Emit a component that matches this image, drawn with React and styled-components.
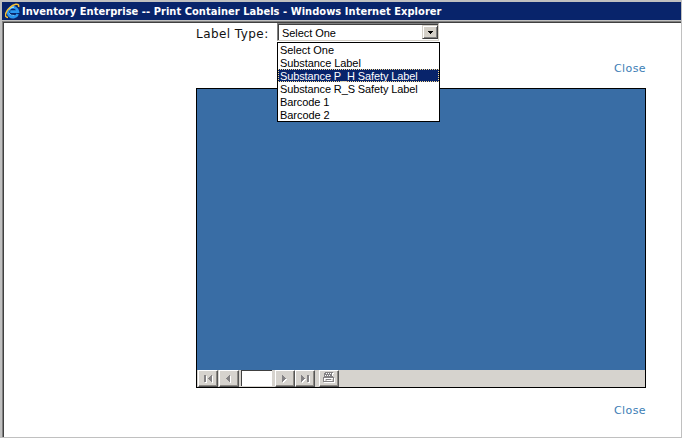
import React from "react";
import styled, { createGlobalStyle, css } from "styled-components";

const GlobalStyle = createGlobalStyle`
  * { box-sizing: border-box; }
  body { margin: 0; background: #fff; overflow: hidden; }
`;

const Window = styled.div`
  width: 682px;
  height: 438px;
  display: flex;
  flex-direction: column;
  background: #c0c0c0;
  padding: 2px 1px 1px 2px;
`;

const TitleBar = styled.header`
  height: 18px;
  flex: none;
  display: flex;
  align-items: center;
  padding-left: 3px;
  background: #08246b;
  color: #fff;
  font: bold 11px/18px "DejaVu Sans Condensed", "DejaVu Sans", sans-serif;
  letter-spacing: 0.05px;
  white-space: nowrap;
`;

const TitleText = styled.span`
  margin-left: 2px;
  padding-top: 1px;
`;

const Frame = styled.main`
  flex: 1;
  margin-top: 1px;
  display: flex;
  flex-direction: column;
  background: #fff;
  border-top: 1px solid #808080;
  border-left: 1px solid #808080;
  box-shadow: inset 1px 1px #404040;
  padding: 1px 0 0 193px;
`;

const FormRow = styled.div`
  display: flex;
  height: 18px;
`;

const Label = styled.label`
  width: 81px;
  padding-top: 3px;
  color: #111;
  font: 12px/17px "DejaVu Sans", Verdana, sans-serif;
  letter-spacing: 0.44px;
  white-space: nowrap;
`;

const SelectWrap = styled.div`
  position: relative;
  width: 162px;
  height: 18px;
`;

const listFont = css`
  font-family: "Liberation Sans", Arial, sans-serif;
  font-size: 11px;
  color: #000;
  white-space: nowrap;
`;

const SelectBox = styled.div`
  ${listFont}
  height: 18px;
  display: flex;
  justify-content: space-between;
  background: #fff;
  border: 1px solid;
  border-color: #808080 #d4d0c8 #d4d0c8 #808080;
  box-shadow: inset 1px 1px #404040;
  padding: 1px 0 1px 4px;
  line-height: 17px;
  letter-spacing: -0.06px;
`;

const DropButton = styled.span`
  width: 16px;
  height: 14px;
  background: #d4d0c8;
  border: 1px solid;
  border-color: #d4d0c8 #404040 #404040 #d4d0c8;
  box-shadow: inset 1px 1px #fff, inset -1px -1px #808080;
  display: flex;
  align-items: center;
  justify-content: center;
`;

const Menu = styled.ul`
  position: absolute;
  z-index: 2;
  top: 19px;
  left: 0;
  width: 163px;
  margin: 0;
  padding: 0;
  list-style: none;
  background: #fff;
  border: 1px solid #000;
`;

const Option = styled.li`
  ${listFont}
  height: 13px;
  padding-left: 2px;
  line-height: 14px;
  letter-spacing: ${(p) => p.$spacing}px;
  ${(p) =>
    p.$active &&
    css`
      color: #fff;
      background: #08246b;
      outline: 1px dotted #f7db94;
      outline-offset: -1px;
    `}
`;

const CloseLink = styled.a`
  width: 450px;
  height: 16px;
  margin-top: ${(p) => p.$gap}px;
  color: #3b7db5;
  font: 11px/16px "DejaVu Sans", Verdana, sans-serif;
  letter-spacing: 0.4px;
  text-align: right;
`;

const Viewer = styled.section`
  width: 450px;
  height: 300px;
  margin-top: 11px;
  display: flex;
  flex-direction: column;
  border: 1px solid #000;
  background: #396da5;
`;

const Canvas = styled.div`
  flex: 1;
`;

const Toolbar = styled.div`
  height: 17px;
  display: flex;
  background: #d6d3ce;
  padding-left: 1px;
`;

const ToolButton = styled.button`
  width: 20px;
  height: 17px;
  margin: 0 ${(p) => p.$gap || 0}px 0 0;
  padding: 0 0 0 1px;
  display: flex;
  align-items: flex-start;
  justify-content: flex-start;
  background: #d6d3ce;
  border: 1px solid;
  border-color: #fff #555 #555 #fff;
  box-shadow: inset -1px -1px #8c8984;
`;

const PageInput = styled.input`
  width: 31px;
  height: 16px;
  margin: 0 3px 0 0;
  padding: 0;
  background: #fff;
  border: 0 solid #404040;
  border-width: 1px 0 0 1px;
  border-radius: 0;
`;

const BrowserLogo = () => (
  <svg width="15" height="16" viewBox="0 0 15 16">
    <path
      d="M12.7 11A5 5 0 1 1 13 8.6H5.2"
      fill="none"
      stroke="#2a96ef"
      strokeWidth="2.6"
    />
    <path d="M4 6.3Q5.7 3.8 9 4.2" fill="none" stroke="#9be0ff" strokeWidth="1.4" />
    <path d="M3.8 10Q5.5 13 9.5 12.5" fill="none" stroke="#6cc6ff" strokeWidth="1" />
    <path
      d="M3 14.5C-1.5 14.4 .5 8.5 4.4 5C8 1.5 14.7-.9 13.6 4"
      fill="none"
      stroke="#f7c235"
      strokeWidth="1.5"
    />
  </svg>
);

const glyphs = {
  first: <path d="M4 4h2v7H4zM11 4h1v7h-1v-1h-1V9H9V8H8V7h1V6h1V5h1z" />,
  prev: <path d="M8 4h1v7H8v-1H7V9H6V8H5V7h1V6h1V5h1z" />,
  next: <path d="M5 4h1v1h1v1h1v1h1v1H8v1H7v1H6v1H5z" />,
  last: <path d="M4 4h1v1h1v1h1v1h1v1H7v1H6v1H5v1H4zM10 4h2v7h-2z" />,
  print: (
    <path
      fillRule="evenodd"
      d="M4 1h8v1h-1v3h1v1h1v5H2V6h1V2h1zM5 2v1h1V2zM7 2v1h1V2zM9 2v1h1V2zM4 4v1h1V4zM6 4v1h1V4zM8 4v1h1V4zM3 7v3h9V7zM5 8h5v1H5z"
    />
  ),
};

const Glyph = ({ name }) => (
  <svg width="16" height="14" viewBox="0 0 16 14" shapeRendering="crispEdges">
    <g fill="#fff" transform="translate(1 1)">{glyphs[name]}</g>
    <g fill="#848284">{glyphs[name]}</g>
  </svg>
);

const options = [
  { text: "Select One", spacing: -0.04 },
  { text: "Substance Label", spacing: -0.08 },
  { text: "Substance P_H Safety Label", spacing: -0.12, active: true },
  { text: "Substance R_S Safety Label", spacing: -0.12 },
  { text: "Barcode 1", spacing: -0.1 },
  { text: "Barcode 2", spacing: -0.06 },
];

export default function App() {
  return (
    <>
      <GlobalStyle />
      <Window>
        <TitleBar>
          <BrowserLogo />
          <TitleText>Inventory Enterprise -- Print Container Labels - Windows Internet Explorer</TitleText>
        </TitleBar>
        <Frame>
          <FormRow>
            <Label>Label Type:</Label>
            <SelectWrap>
              <SelectBox>
                Select One
                <DropButton>
                  <svg width="5" height="3" shapeRendering="crispEdges">
                    <path d="M0 0h5v1H4v1H3v1H2V2H1V1H0z" />
                  </svg>
                </DropButton>
              </SelectBox>
              <Menu>
                {options.map((o) => (
                  <Option key={o.text} $spacing={o.spacing} $active={o.active}>
                    {o.text}
                  </Option>
                ))}
              </Menu>
            </SelectWrap>
          </FormRow>
          <CloseLink $gap={20}>Close</CloseLink>
          <Viewer>
            <Canvas />
            <Toolbar>
              <ToolButton $gap={1}><Glyph name="first" /></ToolButton>
              <ToolButton $gap={2}><Glyph name="prev" /></ToolButton>
              <PageInput aria-label="Page" />
              <ToolButton><Glyph name="next" /></ToolButton>
              <ToolButton $gap={4}><Glyph name="last" /></ToolButton>
              <ToolButton><Glyph name="print" /></ToolButton>
            </Toolbar>
          </Viewer>
          <CloseLink $gap={15}>Close</CloseLink>
        </Frame>
      </Window>
    </>
  );
}
